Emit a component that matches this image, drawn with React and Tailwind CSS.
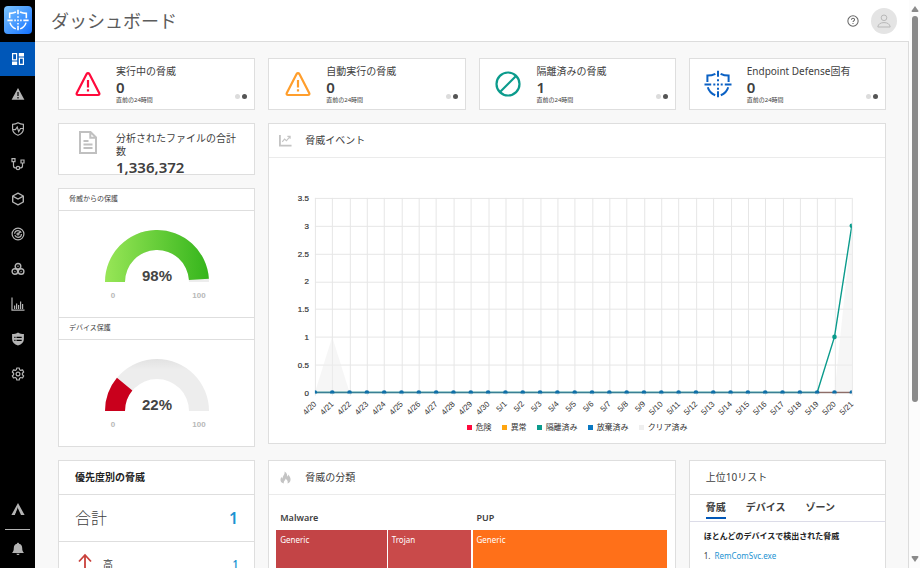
import React, { useState } from 'react';
import clsx from 'clsx';

const days = [
  ...Array.from({ length: 11 }, (_, i) => `4/${20 + i}`),
  ...Array.from({ length: 21 }, (_, i) => `5/${1 + i}`),
];

const legend = [
  { label: '危険', color: 'bg-[#ff0a3c]' },
  { label: '異常', color: 'bg-[#ffa50f]' },
  { label: '隔離済み', color: 'bg-[#0b9b8c]' },
  { label: '放棄済み', color: 'bg-[#0a78c2]' },
  { label: 'クリア済み', color: 'bg-[#efefef]' },
];

const Icon = ({ size = 'size-[14px]', children, ...props }) => (
  <svg viewBox="0 0 14 14" className={size} fill="none" stroke="currentColor" strokeWidth="1.2" aria-hidden="true" {...props}>
    {children}
  </svg>
);

const ShieldTarget = ({ className }) => (
  <svg viewBox="0 0 28 28" className={className} fill="none" stroke="currentColor" strokeWidth="2" aria-hidden="true">
    <path d="M14 .8v5.9M14 21.3v5.9M.5 14.5h6.7M20.8 14.5h6.7" />
    <path d="M9.3 14.5h2M16.700 14.5h2M13 14.500h2M14 9.200v2M14 17.800v2" />
    <path d="M3.400 11.900V5.600c3 0 5.600-.6 8-1.800M24.600 11.900V5.600c-3 0-5.600-.6-8-1.800M3.800 17.300c1 3.600 3.700 6.500 7.400 8M24.200 17.300c-1 3.600-3.700 6.500-7.400 8" />
  </svg>
);

const WarningIcon = () => (
  <svg viewBox="0 0 26 26" className="size-[26px]" fill="none" stroke="currentColor" strokeWidth="2.2" strokeLinejoin="round" aria-hidden="true">
    <path d="M11.6 3.100 1.800 22c-.6 1.200 0 2 1.200 2h20c1.200 0 1.800-.8 1.200-2L14.400 3.100c-.7-1.200-2.100-1.200-2.800 0z" />
    <path d="M13 9v7.500M13 18.300v2.200" />
  </svg>
);

const BanIcon = () => (
  <svg viewBox="0 0 26 26" className="size-[26px]" fill="none" stroke="currentColor" strokeWidth="2.2" aria-hidden="true">
    <circle cx="13" cy="13" r="11.5" />
    <path d="M5 21 21 5" />
  </svg>
);

const menu = [
  {
    label: 'ダッシュボード',
    icon: (
      <Icon>
        <path d="M1.600 1.600h4v6.300h-4zM8.400 6.100h4v6.300h-4z" />
        <path d="M7.800 1h5.200v3.500H7.800zM1 9.500h5.200V13H1z" fill="currentColor" stroke="none" />
      </Icon>
    ),
  },
  {
    label: '脅威',
    icon: (
      <Icon>
        <path d="M7 1 13.400 12.700H.6z" fill="currentColor" stroke="none" />
        <path d="M7 5v4M7 10v1.500" stroke="#000" />
      </Icon>
    ),
  },
  {
    label: '保護',
    icon: (
      <Icon>
        <path d="M7 .8c1.600 1 3.400 1.500 5.400 1.500V7c0 3-2 5-5.400 6.300C3.600 12 1.600 10 1.600 7V2.300C3.600 2.300 5.400 1.800 7 .8z" />
        <path d="M2 7.600h2.500L6.200 5l1.500 4.500L9.500 6.500H12" />
      </Icon>
    ),
  },
  {
    label: 'ゾーン',
    icon: (
      <Icon>
        <path d="M1 1.600h3v3H1zM10 3h3v3h-3z" />
        <circle cx="7" cy="11" r="1.700" />
        <path d="M2.500 4.600V9q0 2 2.800 2M11.500 6v3q0 2-2.800 2" />
      </Icon>
    ),
  },
  {
    label: 'アセット',
    icon: (
      <Icon strokeWidth="1.400">
        <path d="M7 1.200 12.300 4v6L7 12.900 1.700 10V4z" strokeLinejoin="round" />
        <path d="M1.700 4.200 7 7l5.300-2.800" />
      </Icon>
    ),
  },
  {
    label: '検出',
    icon: (
      <Icon>
        <circle cx="7" cy="7" r="5.900" />
        <circle cx="7" cy="7" r="3.400" strokeDasharray="9 1.600" />
        <circle cx="7" cy="7" r="1" />
        <path d="M7.500 6.500 9.600 4.400" />
      </Icon>
    ),
  },
  {
    label: 'グローバルリスト',
    icon: (
      <Icon strokeWidth="1.400">
        <circle cx="7" cy="4.300" r="2.800" />
        <circle cx="3.900" cy="9.500" r="2.800" />
        <circle cx="10.100" cy="9.500" r="2.800" />
        <path d="M7 3.700v1M3.600 9.900l.7-.6M10.400 9.900l-.7-.6M6 7.500h2" />
      </Icon>
    ),
  },
  {
    label: 'レポート',
    icon: (
      <Icon>
        <path d="M1 .5v12.700h12.500" />
        <path d="M3.600 12V8.500M5.600 12V6.500M7.600 12V8M9.600 12V4.500M11.600 12V7" />
      </Icon>
    ),
  },
  {
    label: 'ポリシー',
    icon: (
      <Icon>
        <path d="M7 .6c1.700 1 3.600 1.500 5.900 1.500V7c0 3.200-2.200 5.300-5.900 6.500C3.300 12.300 1.100 10.200 1.100 7V2.100C3.400 2.100 5.300 1.600 7 .6z" fill="currentColor" stroke="none" />
        <path d="M3.300 5.300h1.200M5.500 5.300h5.200M3.300 8.300h1.200M5.500 8.300h5.200" stroke="#000" />
      </Icon>
    ),
  },
  {
    label: '設定',
    icon: (
      <Icon>
        <path
          d="M5.800 1h2.400l.4 1.700 1.200.7 1.700-.5 1.200 2.100-1.300 1.200v1.500l1.300 1.200-1.200 2.100-1.700-.5-1.200.7-.4 1.800H5.800l-.4-1.800-1.200-.7-1.700.5L1.300 8.900l1.300-1.200V6.200L1.300 5l1.200-2.100 1.700.5 1.200-.7z"
          strokeLinejoin="round"
        />
        <circle cx="7" cy="7" r="1.900" />
      </Icon>
    ),
  },
];

const Sidebar = () => (
  <nav className="flex w-[35px] shrink-0 flex-col items-center bg-black text-[#b4b4b4]">
    <div className="flex h-[42px] shrink-0 items-start justify-center pt-[6px]">
      <a href="#home" aria-label="ホーム" className="flex size-7 items-center justify-center rounded-sm bg-gradient-to-br from-[#7cc4ff] to-[#0d6efd] text-white">
        <ShieldTarget className="size-[22px]" />
      </a>
    </div>
    {menu.map((item, i) => (
      <a
        key={item.label}
        href={`#menu-${i}`}
        aria-label={item.label}
        className={clsx('flex w-full shrink-0 items-center justify-center', i === 0 ? 'h-[34px] bg-[#0057b8] text-white' : 'h-[35px]')}
      >
        {item.icon}
      </a>
    ))}
    <div className="mt-auto flex w-full flex-col items-center">
      <a href="#zones" aria-label="サポート" className="flex h-10 items-center">
        <Icon>
          <path d="M7 1 13.600 13H10L7 6.500 4 13H.4z" fill="currentColor" stroke="none" />
          <path d="M7 5v8L4 13z" fill="#000" stroke="none" />
        </Icon>
      </a>
      <div className="h-px w-[25px] bg-[#b4b4b4]"></div>
      <button aria-label="通知" className="flex h-[38px] items-center">
        <Icon>
          <path d="M7 .8c.7 0 1 .4 1 1C10.200 2.300 11.200 4 11.200 6c0 2.800.6 3.800 1.800 5H1c1.200-1.200 1.800-2.200 1.800-5 0-2 1-3.700 3.200-4.200 0-.6.3-1 1-1zM5.400 11.800h3.200c-.3 1.600-2.900 1.600-3.200 0z" fill="currentColor" stroke="none" />
        </Icon>
      </button>
    </div>
  </nav>
);

const StatCard = ({ icon, color, title, value }) => (
  <section className="flex h-[52px] border border-[#dedede] bg-white">
    <div className={clsx('flex w-[57px] shrink-0 items-center justify-center', color)}>{icon}</div>
    <div className="min-w-0 flex-1 pt-[6px]">
      <h2 className="text-[10px] leading-[13px] whitespace-nowrap">{title}</h2>
      <p className="text-[15px] leading-[18px] font-semibold">{value}</p>
      <p className="text-[6px] leading-[8px]">直前の24時間</p>
    </div>
    <div className="flex gap-[2px] self-end pr-[7px] pb-[10px]">
      <button aria-label="合計" className="size-[5px] rounded-full bg-[#dcdcdc]"></button>
      <button aria-label="直前の24時間" className="size-[5px] rounded-full bg-[#555]"></button>
    </div>
  </section>
);

const Gauge = ({ title, value, fill }) => {
  const angle = Math.PI * (1 - value / 100);
  const cos = Math.cos(angle);
  const sin = Math.sin(angle);
  const arc = `M0 52A52 52 0 0 1 ${52 + 52 * cos} ${52 - 52 * sin}L${52 + 32 * cos} ${52 - 32 * sin}A32 32 0 0 0 20 52z`;

  return (
    <>
      <h2 className="h-[22px] border-b border-[#dedede] pl-[10px] text-[7px] leading-[20px]">{title}</h2>
      <div className="flex h-[106px] justify-center pt-[19px]">
        <svg viewBox="0 0 104 72" className="h-[72px] w-[104px]" role="img" aria-label={`${title} ${value}%`}>
          <defs>
            <linearGradient id="green">
              <stop offset="0" stopColor="#98e657" />
              <stop offset="1" stopColor="#35b51c" />
            </linearGradient>
            <linearGradient id="track" x2="0" y2="1">
              <stop offset="0" stopColor="#e2e2e2" />
              <stop offset=".2" stopColor="#ededed" />
            </linearGradient>
          </defs>
          <path d="M0 52A52 52 0 0 1 104 52H84A32 32 0 0 0 20 52z" fill="url(#track)" />
          <path d={arc} fill={fill} />
          <g className="font-['Liberation_Sans',sans-serif] font-bold" textAnchor="middle">
            <text x="52" y="51" fill="#444" fontSize="15">{value}%</text>
            <text x="8" y="68" fill="#b8b8b8" fontSize="8">0</text>
            <text x="94" y="68" fill="#b8b8b8" fontSize="8">100</text>
          </g>
        </svg>
      </div>
    </>
  );
};

const left = 46;
const right = 584;
const top = 40;
const bottom = 235;
const px = (i) => left + (i * (right - left)) / (days.length - 1);
const py = (v) => bottom - (v * (bottom - top)) / 3.5;

const ThreatChart = () => (
  <svg viewBox="0 0 617 264" className="w-full font-['Liberation_Sans',sans-serif]" role="img" aria-label="脅威イベント">
    <defs>
      <clipPath id="plot">
        <rect x={left} y={top} width={right - left} height={bottom - top + 1} />
      </clipPath>
    </defs>
    <g stroke="#e6e6e6" fill="#333" fontSize="8">
      {[0, 0.5, 1, 1.5, 2, 2.5, 3, 3.5].map((v) => (
        <g key={v}>
          <path d={`M${left} ${Math.round(py(v)) + 0.5}H${right}`} />
          <text x="40" y={py(v) + 3} textAnchor="end" stroke="#333" strokeWidth=".2">{v}</text>
        </g>
      ))}
      {days.map((day, i) => (
        <g key={day}>
          <path d={`M${Math.round(px(i)) + 0.5} ${top}V${bottom + 3}`} />
          <text textAnchor="end" stroke="none" transform={`translate(${px(i) + 2} ${bottom + 12}) rotate(-45)`}>{day}</text>
        </g>
      ))}
    </g>
    <g clipPath="url(#plot)">
      <path d={`M${px(0)} ${bottom}L${px(1)} ${py(1)}L${px(2)} ${bottom}zM${px(30)} ${bottom}L${right} ${py(3)}V${bottom}z`} fill="#eee" opacity=".5" />
      <path d={`M${px(29)} ${bottom}H${right}`} stroke="#8d6d68" strokeWidth="1.5" />
      <path d={`M${left} ${bottom}H${px(29)}L${px(30)} ${py(1)}L${right} ${py(3)}`} fill="none" stroke="#0b9b8c" strokeWidth="1.4" />
      <path d={`M${left} ${bottom}H${px(29)}`} stroke="#3a7f95" strokeWidth="1.5" />
      <circle cx={px(30)} cy={py(1)} r="2.3" fill="#0b9b8c" />
      <circle cx={right} cy={py(3)} r="2.3" fill="#0b9b8c" />
      {days.map((day, i) => (
        <circle key={day} cx={px(i)} cy={bottom} r="2.3" fill="#0f6fa8" />
      ))}
    </g>
  </svg>
);

const tabs = ['脅威', 'デバイス', 'ゾーン'];

const TopTen = () => {
  const [active, setActive] = useState(0);

  return (
    <section className="self-stretch border border-[#dedede] bg-white">
      <h2 className="h-[34px] border-b border-[#dedede] pl-4 text-[10px] leading-[32px]">上位10リスト</h2>
      <div role="tablist" className="flex h-[27px] gap-5 border-b border-[#dcdce8] px-4">
        {tabs.map((tab, i) => (
          <button
            key={tab}
            role="tab"
            aria-selected={active === i}
            onClick={() => setActive(i)}
            className={clsx('h-6 border-b-2 pt-[2px] text-[10px] leading-[20px] font-bold', active === i ? 'border-[#0057b8]' : 'border-transparent')}
          >
            {tab}
          </button>
        ))}
      </div>
      <div className="px-[14px] pt-2 text-[8px]">
        <h3 className="leading-[12px] font-bold text-[#222]">ほとんどのデバイスで検出された脅威</h3>
        <ol className="mt-2 leading-[12px]">
          <li className="flex gap-1">
            <span>1.</span>
            <a href="#threat" className="text-[#1c93d2]">RemComSvc.exe</a>
          </li>
        </ol>
      </div>
    </section>
  );
};

const App = () => {
  return (
    <div className="flex h-screen overflow-hidden bg-[#f8f8f8] font-['Noto_Sans','Noto_Sans_CJK_JP',sans-serif] text-[#404040]">
      <Sidebar />

      <div className="flex min-w-0 flex-1 flex-col">
        {/* Header */}
        <header className="flex h-[42px] shrink-0 items-center justify-between border-b border-[#dcdcdc] bg-white pr-3 pl-4">
          <h1 className="text-lg leading-6 text-[#5c5c5c]">ダッシュボード</h1>
          <div className="flex items-center gap-3">
            <button aria-label="ヘルプ" className="text-[#666]">
              <Icon size="size-3">
                <circle cx="7" cy="7" r="6" />
                <path d="M5.200 5.600c0-2.400 3.700-2.300 3.600-.1 0 1.300-1.800 1.300-1.800 2.800M7 9.300v1.300" />
              </Icon>
            </button>
            <button aria-label="アカウント" className="flex size-[26px] items-center justify-center rounded-full bg-[#e4e4e4] text-[#b8b8b8]">
              <Icon strokeWidth="1">
                <circle cx="7" cy="3.800" r="2.800" />
                <path d="M.8 13c.4-3 2.700-4.400 6.200-4.400s5.800 1.400 6.200 4.400z" />
              </Icon>
            </button>
          </div>
        </header>

        <main className="flex-1 overflow-hidden border-r border-[#dcdcdc] px-[22px] pt-4 pl-[23px]">
          <div className="grid grid-cols-4 items-start gap-[13px]">
            <StatCard title="実行中の脅威" value="0" color="text-[#ff0a3c]" icon={<WarningIcon />} />
            <StatCard title="自動実行の脅威" value="0" color="text-[#ff9e2c]" icon={<WarningIcon />} />
            <StatCard title="隔離済みの脅威" value="1" color="text-[#0b9b8c]" icon={<BanIcon />} />
            <StatCard title="Endpoint Defense固有" value="0" color="text-[#0b61c4]" icon={<ShieldTarget className="size-7" />} />

            <div className="flex flex-col gap-[13px]">
              <section className="flex h-[52px] border border-[#dedede] bg-white">
                <div className="flex w-[57px] shrink-0 justify-center pt-[7px] text-[#c0c0c0]">
                  <svg viewBox="0 0 18 23" className="h-[23px] w-[18px]" fill="none" stroke="currentColor" strokeWidth="2" aria-hidden="true">
                    <path d="M1 1h10.500L17 6.500V22H1zM11.300 1v5.700H17M4.500 10h5M4.500 13.500h9M4.500 17h9" />
                  </svg>
                </div>
                <div className="min-w-0 flex-1 pt-2 pr-3">
                  <h2 className="text-[10px] leading-[13px]">分析されたファイルの合計数</h2>
                  <p className="text-[15px] leading-[18px] font-semibold">1,336,372</p>
                </div>
              </section>

              <section className="border border-[#dedede] bg-white">
                <Gauge title="脅威からの保護" value={98} fill="url(#green)" />
                <div className="border-t border-[#dedede]">
                  <Gauge title="デバイス保護" value={22} fill="#c9001c" />
                </div>
              </section>
            </div>

            <section className="col-span-3 border border-[#dedede] bg-white">
              <div className="flex h-[34px] items-center border-b border-[#ebebeb] pl-[10px]">
                <Icon className="mr-[13px] size-[13px] text-[#c4c4c4]">
                  <path d="M1 1v11.500h12.500" strokeWidth="2" />
                  <path d="M3.500 8.500 6 5.500l2 1.800L11.500 3M9 2.500h3V5" />
                </Icon>
                <h2 className="text-[10px]">脅威イベント</h2>
              </div>
              <ThreatChart />
              <ul className="flex h-[22px] justify-center gap-[10px] text-[8px] leading-[12px]">
                {legend.map((item) => (
                  <li key={item.label} className="flex h-3 items-center gap-1 text-[#333]">
                    <span className={clsx('size-[5px]', item.color)}></span>
                    {item.label}
                  </li>
                ))}
              </ul>
            </section>

            <section className="self-stretch border border-[#dedede] bg-white">
              <h2 className="h-[34px] border-b border-[#dedede] pl-4 text-[10px] leading-[32px] font-bold text-[#222]">優先度別の脅威</h2>
              <div className="flex h-[47px] items-center justify-between border-b border-[#dedede] px-4 text-base">
                <span className="font-light">合計</span>
                <a href="#total" className="font-semibold text-[#1c93d2]">1</a>
              </div>
              <div className="flex h-[45px] items-center px-4 text-[10px]">
                <svg viewBox="0 0 20 26" className="mr-2 h-[26px] w-5" fill="none" stroke="#c9413c" strokeWidth="1.800" aria-hidden="true">
                  <path d="M10 25V4M4 9.500 10 3l6 6.500" />
                </svg>
                <span>高</span>
                <a href="#high" className="ml-auto font-semibold text-[#1c93d2]">1</a>
              </div>
            </section>

            <section className="col-span-2 border border-[#dedede] bg-white">
              <div className="flex h-[34px] items-center border-b border-[#ebebeb] pl-[10px]">
                <Icon className="mr-[13px] size-[13px] text-[#c4c4c4]">
                  <path d="M6 .5c3 2 3 3.800 2.700 5.500.9-.4 1.200-1.200 1.200-2.200 4 4.200 3 8.500-.7 9.700.8-2-.3-3.700-2.200-5.300.2 2-2.500 2.800-1.700 5.300-4-.9-4.600-4.500-2.500-7.300 0 1 .3 1.600 1 1.900C3.700 5.500 6.500 4 6 .5z" fill="currentColor" stroke="none" />
                </Icon>
                <h2 className="text-[10px]">脅威の分類</h2>
              </div>
              <div className="grid grid-cols-2 gap-x-[2px] pt-4 pr-2 pl-[7px] text-[8px]">
                <h3 className="pb-[5px] pl-1 text-[9px] leading-[14px] font-semibold">Malware</h3>
                <h3 className="pb-[5px] pl-1 text-[9px] leading-[14px] font-semibold">PUP</h3>
                <div className="grid h-40 grid-cols-[4fr_3fr] gap-px leading-[20px] text-white">
                  <div className="bg-[#c34446] pl-1">Generic</div>
                  <div className="bg-[#c94a4a] pl-1">Trojan</div>
                </div>
                <div className="h-40 bg-[#ff7019] pl-1 leading-[20px] text-white">Generic</div>
              </div>
            </section>

            <TopTen />
          </div>
        </main>
      </div>

      {/* Scroll track */}
      <div className="flex w-[11px] shrink-0 flex-col items-center bg-[#fcfcfc] py-[6px]">
        <svg viewBox="0 0 8 6" className="h-[6px] w-2" aria-hidden="true">
          <path d="M4 0 7.500 5q0 1-1 1h-5q-1 0-1-1z" fill="#8a8a8a" />
        </svg>
        <div className="mt-1 w-[6px] flex-[5_0_0] rounded-full bg-[#8a8a8a]"></div>
        <div className="flex-[2_0_0]"></div>
        <svg viewBox="0 0 8 6" className="h-[6px] w-2" aria-hidden="true">
          <path d="M4 6 .5 1q0-1 1-1h5q1 0 1 1z" fill="#8a8a8a" />
        </svg>
      </div>
    </div>
  );
};

export default App;
